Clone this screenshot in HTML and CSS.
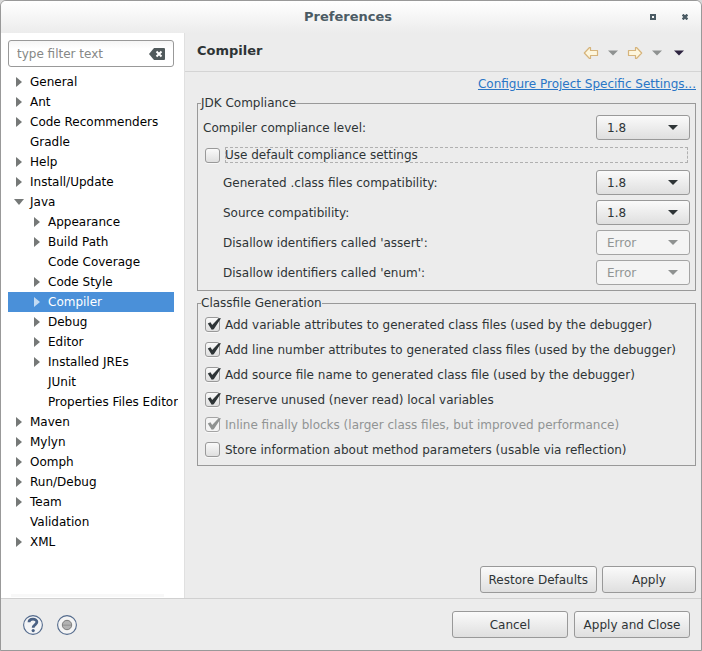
FILE: index.html
```html
<!DOCTYPE html>
<html lang="en">
<head>
<meta charset="utf-8">
<meta name="viewport" content="width=device-width, initial-scale=1">
<title>Preferences</title>
<link rel="stylesheet" href="styles.css">
</head>
<body>
<div class="window">
  <header class="titlebar">
    <h1 class="titlebar-text">Preferences</h1>
    <button class="icon-button" type="button" aria-label="Maximize">
      <svg width="6" height="6" viewBox="0 0 6 6"><path d="M1 1h4v4H1z" fill="none" stroke="#4b5b64" stroke-width="2"/></svg>
    </button>
    <button class="icon-button" type="button" aria-label="Close">
      <svg width="6" height="6" viewBox="0 0 6 6"><path d="M.6 .6l4.800 4.800M5.400 .6L.6 5.400" fill="none" stroke="#4b5b64" stroke-width="2.400"/></svg>
    </button>
  </header>

  <div class="body">
    <nav class="sidebar" aria-label="Preference pages">
      <div class="filter">
        <input class="filter-input" type="text" placeholder="type filter text" aria-label="Filter">
        <button class="icon-button" type="button" aria-label="Clear filter">
          <svg width="16" height="12" viewBox="0 0 16 12"><path d="M5 0h10a1 1 0 0 1 1 1v10a1 1 0 0 1-1 1H5L0 6z" fill="#515a5c"/><path d="M7.500 3.500l5 5M12.500 3.500l-5 5" stroke="#fff" stroke-width="2"/></svg>
        </button>
      </div>
      <ul class="tree">
        <li class="node closed">General</li>
        <li class="node closed">Ant</li>
        <li class="node closed">Code Recommenders</li>
        <li class="node">Gradle</li>
        <li class="node closed">Help</li>
        <li class="node closed">Install/Update</li>
        <li class="node open">Java</li>
        <li class="node child closed">Appearance</li>
        <li class="node child closed">Build Path</li>
        <li class="node child">Code Coverage</li>
        <li class="node child closed">Code Style</li>
        <li class="node child closed selected">Compiler</li>
        <li class="node child closed">Debug</li>
        <li class="node child closed">Editor</li>
        <li class="node child closed">Installed JREs</li>
        <li class="node child">JUnit</li>
        <li class="node child">Properties Files Editor</li>
        <li class="node closed">Maven</li>
        <li class="node closed">Mylyn</li>
        <li class="node closed">Oomph</li>
        <li class="node closed">Run/Debug</li>
        <li class="node closed">Team</li>
        <li class="node">Validation</li>
        <li class="node closed">XML</li>
      </ul>
      <div class="scroll-track"></div>
    </nav>

    <main class="page">
      <div class="page-header">
        <h2 class="page-title">Compiler</h2>
        <div class="history">
          <button class="icon-button" type="button" aria-label="Back">
            <svg width="16" height="14" viewBox="0 0 16 14"><path d="M1.300 7L6.500 1.500H7.500V4.500H14.500V9.500H7.500V12.500H6.500z" fill="#fdf6dd" stroke="#d6b47c" stroke-width="1.200" stroke-linejoin="round"/></svg>
          </button>
          <button class="icon-button" type="button" aria-label="Back history">
            <svg width="10" height="6" viewBox="0 0 10 6"><path d="M0 .5h10L5 5.500z" fill="#8f9291"/></svg>
          </button>
          <button class="icon-button" type="button" aria-label="Forward">
            <svg width="16" height="14" viewBox="0 0 16 14"><path d="M14.700 7L9.500 1.500H8.500V4.500H1.500V9.500H8.500V12.500H9.500z" fill="#fdf6dd" stroke="#d6b47c" stroke-width="1.200" stroke-linejoin="round"/></svg>
          </button>
          <button class="icon-button" type="button" aria-label="Forward history">
            <svg width="10" height="6" viewBox="0 0 10 6"><path d="M0 .5h10L5 5.500z" fill="#8f9291"/></svg>
          </button>
          <button class="icon-button menu-button" type="button" aria-label="View menu">
            <svg width="10" height="6" viewBox="0 0 10 6"><path d="M0 .5h10L5 5.500z" fill="#2e2440"/></svg>
          </button>
        </div>
      </div>

      <div class="page-content">
        <a class="project-link" href="#">Configure Project Specific Settings...</a>

        <fieldset class="group">
          <legend>JDK Compliance</legend>
          <div class="settings">
            <div class="setting">
              <label for="level">Compiler compliance level:</label>
              <span class="combo"><select id="level"><option>1.8</option></select></span>
            </div>
            <div class="check focused">
              <input type="checkbox" id="defaults"><label for="defaults">Use default compliance settings</label>
            </div>
            <div class="setting nested">
              <label for="classfiles">Generated .class files compatibility:</label>
              <span class="combo"><select id="classfiles"><option>1.8</option></select></span>
            </div>
            <div class="setting nested">
              <label for="source">Source compatibility:</label>
              <span class="combo"><select id="source"><option>1.8</option></select></span>
            </div>
            <div class="setting nested">
              <label for="assert">Disallow identifiers called 'assert':</label>
              <span class="combo disabled"><select id="assert" disabled><option>Error</option></select></span>
            </div>
            <div class="setting nested">
              <label for="enum">Disallow identifiers called 'enum':</label>
              <span class="combo disabled"><select id="enum" disabled><option>Error</option></select></span>
            </div>
          </div>
        </fieldset>

        <fieldset class="group">
          <legend>Classfile Generation</legend>
          <div class="checks">
            <div class="check"><input type="checkbox" id="c1" checked><label for="c1">Add variable attributes to generated class files (used by the debugger)</label></div>
            <div class="check"><input type="checkbox" id="c2" checked><label for="c2">Add line number attributes to generated class files (used by the debugger)</label></div>
            <div class="check"><input type="checkbox" id="c3" checked><label for="c3">Add source file name to generated class file (used by the debugger)</label></div>
            <div class="check"><input type="checkbox" id="c4" checked><label for="c4">Preserve unused (never read) local variables</label></div>
            <div class="check"><input type="checkbox" id="c5" checked disabled><label for="c5">Inline finally blocks (larger class files, but improved performance)</label></div>
            <div class="check"><input type="checkbox" id="c6"><label for="c6">Store information about method parameters (usable via reflection)</label></div>
          </div>
        </fieldset>

        <div class="page-actions">
          <button class="button" type="button">Restore Defaults</button>
          <button class="button" type="button">Apply</button>
        </div>
      </div>
    </main>
  </div>

  <footer class="footer">
    <button class="icon-button" type="button" aria-label="Help">
      <svg width="20" height="20" viewBox="0 0 20 20"><circle cx="10" cy="10" r="9.400" fill="#f3f4f6" stroke="#536a8c" stroke-width="1.100"/><path d="M6 7.300C6 3.200 13.900 3 13.900 7.100C13.900 9.600 10.200 9.500 10.200 12.800" fill="none" stroke="#4b6285" stroke-width="2.800"/><circle cx="10.200" cy="15.600" r="1.600" fill="#4b6285"/></svg>
    </button>
    <button class="icon-button" type="button" aria-label="Record preferences">
      <svg width="20" height="20" viewBox="0 0 20 20"><circle cx="10" cy="10" r="9.400" fill="#f4f4f4" stroke="#536a8c" stroke-width="1.100"/><circle cx="10" cy="10" r="4.700" fill="#b2b2b2" stroke="#7c7c7c"/><path d="M6 9.500h8v1.500H6z" fill="#9b9b9b"/></svg>
    </button>
    <div class="dialog-actions">
      <button class="button" type="button">Cancel</button>
      <button class="button" type="button">Apply and Close</button>
    </div>
  </footer>
</div>
</body>
</html>
```
FILE: styles.css
```css
* {
  box-sizing: border-box;
}

body {
  margin: 0;
  background: #d8d8d8;
  color: #2e3436;
  font: 12px/16px "DejaVu Sans", sans-serif;
}

button,
input,
select {
  margin: 0;
  color: inherit;
  font: inherit;
}

.window {
  display: flex;
  flex-direction: column;
  min-height: 100vh;
  border: 1px solid #999;
  border-radius: 6px 6px 0 0;
  background: #ececec;
  overflow: hidden;
}

.icon-button {
  display: flex;
  padding: 0;
  border: 0;
  background: none;
}

.titlebar {
  display: flex;
  align-items: center;
  gap: 26px;
  height: 32px;
  padding: 0 13px 0 71px;
  background: linear-gradient(#fff, #ececec);
}

.titlebar-text {
  flex: 1;
  margin: 0;
  font-size: 13px;
  text-align: center;
  color: #4b5b64;
}

.body {
  display: flex;
  flex: 1;
}

/* Page tree */

.sidebar {
  display: flex;
  flex-direction: column;
  flex: 0 0 184px;
  min-width: 0;
  padding: 7px 10px 0 7px;
  border-right: 1px solid #e0e0e0;
  background: #fff;
}

.filter {
  display: flex;
  align-items: center;
  height: 27px;
  margin-bottom: 5px;
  padding: 0 8px;
  border: 1px solid #999;
  border-radius: 3px;
  background: linear-gradient(#f5f5f5, #fff 8px);
}

.filter-input {
  flex: 1;
  min-width: 0;
  padding: 0;
  border: 0;
  outline: 0;
  background: none;
}

.filter-input::placeholder {
  color: #868886;
  opacity: 1;
}

.tree {
  margin: 0;
  padding: 0;
  list-style: none;
  color: #000;
}

.node {
  display: flex;
  align-items: center;
  height: 20px;
  overflow: clip;
  overflow-clip-margin: 4px;
  white-space: nowrap;
}

.node::before {
  content: "";
  flex: none;
  width: 6px;
  height: 10px;
  margin: 0 8px;
}

.child {
  padding-left: 18px;
}

.closed::before {
  background: #757877;
  clip-path: polygon(0 0, 100% 50%, 0 100%);
}

.open::before {
  width: 10px;
  height: 6px;
  margin: 0 6px;
  background: #757877;
  clip-path: polygon(0 0, 100% 0, 50% 100%);
}

.selected {
  background: #4a90d9;
  color: #fff;
}

.selected::before {
  background: #c3dbf3;
}

.scroll-track {
  height: 3px;
  margin: auto 10px 1px 3px;
  background: #f8f8f8;
}

/* Page */

.page {
  display: flex;
  flex-direction: column;
  flex: 1;
  min-width: 0;
}

.page-header {
  display: flex;
  align-items: center;
  justify-content: space-between;
  height: 39px;
  padding: 0 17px 0 12px;
  border-bottom: 1px solid #d4d4d4;
}

.page-title {
  margin: 0 0 3px;
  font-size: 13px;
}

.history {
  display: flex;
  align-items: center;
  gap: 9px;
  padding-top: 2px;
}

.menu-button {
  margin-left: 3px;
}

.page-content {
  display: flex;
  flex-direction: column;
  flex: 1;
  padding: 4px 5px 5px 12px;
}

.project-link {
  align-self: flex-end;
  margin-bottom: 3px;
  color: #2a76c6;
}

.group {
  min-width: 0;
  margin: 0 0 4px;
  padding: 0 5px 3px 3px;
  border: 1px solid #999;
}

.group legend {
  padding: 0;
}

.settings {
  display: flex;
  flex-direction: column;
  gap: 5px;
  padding: 4px 0 2px 2px;
}

.setting {
  display: flex;
  align-items: center;
  justify-content: space-between;
}

.nested {
  padding-left: 20px;
}

.combo {
  position: relative;
  display: flex;
  width: 94px;
}

.combo::after {
  content: "";
  position: absolute;
  top: 10px;
  right: 12px;
  width: 10px;
  height: 5px;
  background: #2e3436;
  clip-path: polygon(0 0, 100% 0, 50% 100%);
  pointer-events: none;
}

.combo.disabled::after {
  background: #8f9291;
}

.combo select {
  appearance: none;
  width: 100%;
  height: 25px;
  padding: 0 10px;
  border: 1px solid #999;
  border-radius: 3px;
  background: linear-gradient(#fafafa, #dfdfdf);
}

.combo select:disabled {
  border-color: #a4a4a4;
  background: #f4f4f4;
  color: #919494;
  opacity: 1;
}

.check {
  display: flex;
  align-items: center;
  gap: 5px;
  height: 25px;
  padding-left: 4px;
}

.check label {
  flex: 1;
}

.checks .check label {
  white-space: nowrap;
}

.check.focused {
  height: 20px;
  padding: 0 2px;
}

.focused label {
  outline: 1px dashed #b0b0b0;
  outline-offset: -1px;
}

.checks {
  padding-top: 1px;
}

.check input {
  appearance: none;
  width: 15px;
  height: 15px;
  border: 1px solid #999;
  border-radius: 3px;
  background: linear-gradient(#fafafa, #dfdfdf);
  box-shadow: 0 1px #f8f8f8;
}

.check input:checked::before {
  content: "";
  display: block;
  width: 15px;
  height: 12px;
  background: #2e3436;
  clip-path: polygon(12% 46%, 30% 36%, 41% 58%, 84% 2%, 100% 2%, 52% 94%, 38% 98%);
}

.check input:disabled {
  border-color: #a4a4a4;
  background: #f4f4f4;
}

.check input:disabled::before {
  background: #8f9291;
}

.check input:disabled + label {
  color: #919494;
}

/* Buttons */

.button {
  min-width: 94px;
  height: 27px;
  padding: 0 8px;
  border: 1px solid #999;
  border-radius: 3px;
  background: linear-gradient(#fafafa, #dfdfdf);
  white-space: nowrap;
}

.page-actions {
  display: flex;
  justify-content: flex-end;
  gap: 5px;
  margin-top: auto;
}

.footer {
  display: flex;
  align-items: center;
  gap: 14px;
  padding: 12px 11px 12px 22px;
  border-top: 1px solid #d0d0d0;
}

.dialog-actions {
  display: grid;
  grid-template-columns: repeat(2, minmax(116px, 1fr));
  gap: 6px;
  margin-left: auto;
}
```
